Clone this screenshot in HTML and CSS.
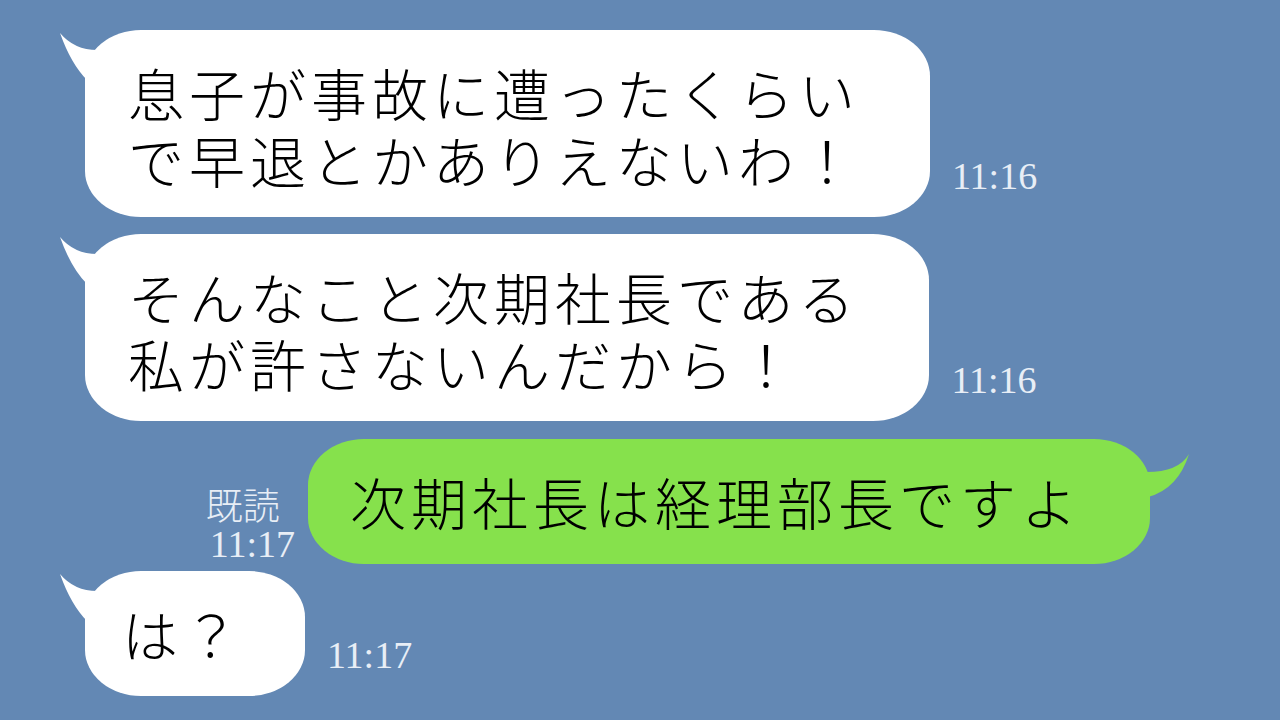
FILE: index.html
```html
<!DOCTYPE html>
<html lang="ja">
<head>
    <meta charset="UTF-8">
    <meta name="viewport" content="width=device-width, initial-scale=1.0">
    <title>トーク</title>
    <link rel="stylesheet" href="styles.css">
</head>
<body>
    <div class="chat">
        <!-- 相手のメッセージ -->
        <div class="row left first">
            <div class="bubble white">
                <svg class="tail tail-left" viewBox="0 0 56 72" width="56" height="72"><path d="M1,3 Q16,21 41,20 L41,72 L28,72 L28,50 Q12,34 1,3 Z"/></svg>
                <p>息子が事故に遭ったくらい<br>で早退とかありえないわ！</p>
            </div>
            <span class="time">11:16</span>
        </div>

        <div class="row left second">
            <div class="bubble white">
                <svg class="tail tail-left" viewBox="0 0 56 72" width="56" height="72"><path d="M1,3 Q16,21 41,20 L41,72 L28,72 L28,50 Q12,34 1,3 Z"/></svg>
                <p>そんなこと次期社長である<br>私が許さないんだから！</p>
            </div>
            <span class="time">11:16</span>
        </div>

        <!-- 自分のメッセージ -->
        <div class="row right third">
            <div class="meta">
                <span class="read">既読</span>
                <span class="time">11:17</span>
            </div>
            <div class="bubble green">
                <svg class="tail tail-right" viewBox="0 0 56 72" width="56" height="72"><path d="M55,15 Q44,34 9,33 L0,33 L0,72 L14,72 L14,58 Q44,50 55,15 Z"/></svg>
                <p>次期社長は経理部長ですよ</p>
            </div>
        </div>

        <div class="row left fourth">
            <div class="bubble white">
                <svg class="tail tail-left" viewBox="0 0 56 72" width="56" height="72"><path d="M1,3 Q16,21 41,20 L41,72 L28,72 L28,50 Q12,34 1,3 Z"/></svg>
                <p>は？</p>
            </div>
            <span class="time">11:17</span>
        </div>
    </div>
</body>
</html>
```

FILE: styles.css
```css
body {
    margin: 0;
    background-color: #6388b4;
    font-family: "Noto Sans CJK JP", sans-serif;
}
.chat {
    width: 1280px;
    height: 720px;
    overflow: hidden;
    padding-top: 30px;
    box-sizing: border-box;
}
.row {
    display: flex;
    align-items: flex-end;
}
.row.left {
    padding-left: 85px;
}
.row.right {
    justify-content: flex-end;
    padding-right: 130px;
}
.first {
    margin-bottom: 17px;
}
.second {
    margin-bottom: 18px;
}
.third {
    margin-bottom: 7px;
}
.bubble {
    position: relative;
    border-radius: 56px / 46px;
}
.bubble p {
    position: relative;
    margin: 0;
    padding: 28px 70px 25px 43px;
    font-size: 56px;
    font-weight: 300;
    line-height: 67px;
    letter-spacing: 5px;
    color: #000;
    white-space: nowrap;
}
.bubble.white {
    background-color: #fff;
    fill: #fff;
}
.bubble.green {
    background-color: #86e14c;
    fill: #86e14c;
}
.green p {
    padding: 28px 68px 30px 42px;
}
.fourth p {
    padding: 28px 61px 30px 37px;
}
.tail {
    position: absolute;
    top: 0;
}
.tail-left {
    left: -26px;
}
.tail-right {
    right: -40px;
}
.time {
    font-family: "Liberation Serif", serif;
    font-size: 38px;
    line-height: 38px;
    color: #e8eef6;
    margin-left: 22px;
    margin-bottom: 22px;
}
.meta {
    display: flex;
    flex-direction: column;
    margin-right: 13px;
    margin-bottom: 1px;
}
.meta .time {
    margin: 0;
}
.read {
    font-size: 37px;
    font-weight: 300;
    line-height: 42px;
    margin-left: -4px;
    color: #e8eef6;
}
```
